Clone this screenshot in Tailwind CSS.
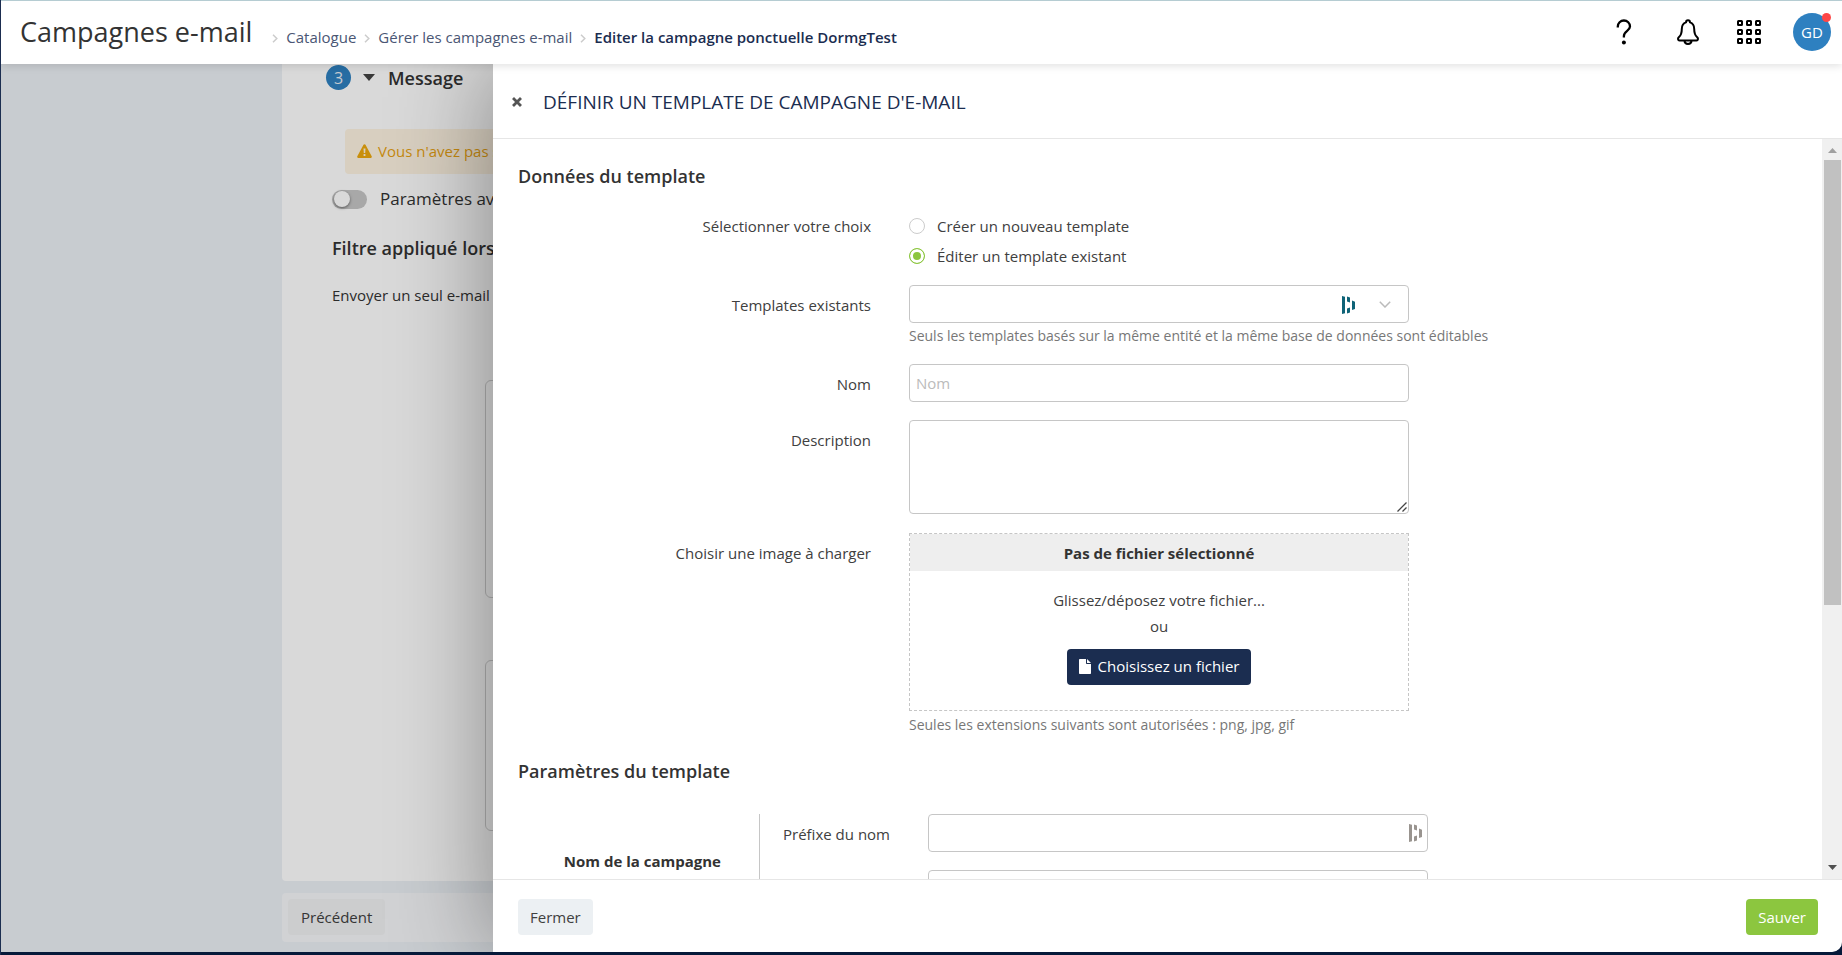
<!DOCTYPE html>
<html lang="fr">
<head>
<meta charset="utf-8">
<title>Campagnes e-mail</title>
<script src="https://cdn.jsdelivr.net/npm/@tailwindcss/browser@4"></script>
</head>
<body class="flex h-screen flex-col overflow-hidden border-l border-[#1b2d50] bg-[#061a3a] font-['Open_Sans','Noto_Sans',sans-serif] text-[15px] leading-5 text-[#404040]">

<header class="relative z-20 flex h-16 shrink-0 items-center justify-between border-t border-[#b5ccd2] bg-white pr-[11px] pl-[19px] shadow-[0_2px_8px_rgba(0,0,0,0.12)]">
  <div class="flex items-center pb-[2px]">
    <h1 class="text-[27px] leading-9 text-[#333]">Campagnes e-mail</h1>
    <nav aria-label="Fil d'Ariane" class="ml-5 flex items-baseline gap-2 pt-[11px] text-[#1b2d50]">
      <svg class="h-[9px] w-[6px]" viewBox="0 0 6 9" fill="none" stroke="#ccc" stroke-width="1.5"><path d="M1 .7 4.8 4.5 1 8.3"/></svg>
      <a href="#" class="text-[#4a5674]">Catalogue</a>
      <svg class="h-[9px] w-[6px]" viewBox="0 0 6 9" fill="none" stroke="#ccc" stroke-width="1.5"><path d="M1 .7 4.8 4.5 1 8.3"/></svg>
      <a href="#" class="text-[#4a5674]">Gérer les campagnes e-mail</a>
      <svg class="h-[9px] w-[6px]" viewBox="0 0 6 9" fill="none" stroke="#ccc" stroke-width="1.5"><path d="M1 .7 4.8 4.5 1 8.3"/></svg>
      <span class="font-semibold">Editer la campagne ponctuelle DormgTest</span>
    </nav>
  </div>
  <div class="flex items-center pb-px">
    <button type="button" aria-label="Aide" class="mr-[45px]">
      <svg class="h-[26px] w-4" viewBox="0 0 16 26" fill="none" stroke="#000" stroke-width="2.3"><path d="M1.8 8.5V7.6a6.1 6.1 0 0 1 12.2 0c0 4.2-6.1 4.4-6.1 9.4v1.6"/><circle cx="7.9" cy="23.6" r="2" fill="#000" stroke="none"/></svg>
    </button>
    <button type="button" aria-label="Notifications" class="mr-[38px]">
      <svg class="h-[26px] w-[22px]" viewBox="0 0 22 26" fill="none" stroke="#000" stroke-width="2" stroke-linejoin="round"><path d="M11 1.2c-1.3 0-2 .8-2 2.2C6 4.4 4.8 7 4.8 10c0 4-.7 6.3-3 8.300-1.300 1.200-.8 3.100.6 3.100h17.200c1.400 0 1.900-1.900.6-3.100-2.300-2-3-4.300-3-8.300 0-3-1.200-5.600-4.200-6.600 0-1.400-.7-2.200-2-2.200z"/><path d="M7.5 21.6c0 2 1.500 3.400 3.500 3.400s3.500-1.400 3.500-3.400"/></svg>
    </button>
    <button type="button" aria-label="Applications" class="mr-8">
      <svg class="h-6 w-6" viewBox="0 0 24 24" fill="none" stroke="#000" stroke-width="2"><rect x="1" y="1" width="4" height="4" rx=".5"/><rect x="10" y="1" width="4" height="4" rx=".5"/><rect x="19" y="1" width="4" height="4" rx=".5"/><rect x="1" y="10" width="4" height="4" rx=".5"/><rect x="10" y="10" width="4" height="4" rx=".5"/><rect x="19" y="10" width="4" height="4" rx=".5"/><rect x="1" y="19" width="4" height="4" rx=".5"/><rect x="10" y="19" width="4" height="4" rx=".5"/><rect x="19" y="19" width="4" height="4" rx=".5"/></svg>
    </button>
    <button type="button" class="relative flex h-[38px] w-[38px] items-center justify-center rounded-full bg-[#2e80c0] text-[15px] text-white">GD<span class="absolute top-0 right-0 h-[9px] w-[9px] rounded-full bg-[#fd4646]"></span></button>
  </div>
</header>

<div class="relative mb-[3px] min-h-0 flex-1 overflow-hidden rounded-br-[10px] bg-[#ecf0f5]">
  <main class="flex h-full flex-col pb-[10px] pl-[281px]">
    <section class="min-h-0 flex-1 overflow-hidden rounded-b bg-white text-[#333]">
      <div class="flex h-[27px] items-center pl-11">
        <span class="flex h-[25px] w-[25px] items-center justify-center rounded-full bg-[#2e80c0] text-base text-[#e8eef4]">3</span>
        <svg class="ml-3 h-[7px] w-3" viewBox="0 0 12 7" fill="#444"><path d="M0 0h12L6 7z"/></svg>
        <h2 class="ml-[13px] text-[18px] font-semibold">Message</h2>
      </div>
      <div class="mt-[38px] ml-[63px] flex h-[45px] items-center rounded bg-[#fef4e2] pb-[2px] pl-3 whitespace-nowrap text-[#e8a213]">
        <svg class="mr-[6px] h-[14px] w-[15px]" viewBox="0 0 15 14"><path d="M7.500.2c.5 0 .8.200 1 .6l6.200 11.500c.4.800-.1 1.600-.9 1.600H1.200c-.8 0-1.300-.8-.9-1.600L6.500.8c.2-.4.500-.6 1-.6z" fill="#eda90f"/><path d="M6.500 4.500h2l-.3 4.600H6.800zM6.600 10h1.800v1.900H6.600z" fill="#fef4e2"/></svg>
        Vous n'avez pas sélectionné de template
      </div>
      <div class="mt-[15px] ml-[50px]">
        <label class="flex items-center gap-[13px] text-[17px] whitespace-nowrap"><input type="checkbox" role="switch" class="peer sr-only"><span class="flex h-[19px] w-[35px] items-center rounded-full bg-[#c6c6c6] px-[2px]"><span class="h-4 w-4 rounded-full bg-white shadow-[0_1px_3px_rgba(0,0,0,0.5)]"></span></span>Paramètres avancés</label>
        <h3 class="mt-[29px] text-[18px] font-semibold whitespace-nowrap">Filtre appliqué lors de l'envoi</h3>
        <p class="mt-[27px] whitespace-nowrap">Envoyer un seul e-mail par adresse</p>
      </div>
      <div class="mt-[75px] ml-[203px] h-[218px] rounded-md border border-[#d0d0d0]"></div>
      <div class="mt-[62px] ml-[203px] h-[171px] rounded-md border border-[#d0d0d0]"></div>
    </section>
    <div class="mt-3 flex h-[49px] shrink-0 items-center rounded bg-[#f6f7fa] pb-px pl-[6px]">
      <button type="button" class="h-9 rounded bg-[#f0f1f2] px-[13px]">Précédent</button>
    </div>
  </main>

  <div class="absolute inset-0 bg-black/15"></div>

  <div role="dialog" aria-labelledby="dlg" class="absolute inset-y-0 right-0 left-[492px] flex flex-col rounded-br-[10px] bg-white shadow-[0_0_100px_rgba(0,0,0,0.4)]">
    <div class="flex h-[75px] shrink-0 items-center border-b border-[#e6e6e6] pt-px pl-[19px]">
      <button type="button" aria-label="Fermer le panneau"><svg class="h-[10px] w-[10px]" viewBox="0 0 10 10" stroke="#555" stroke-width="2.8" stroke-linecap="square"><path d="m2 2 6 6M8 2 2 8"/></svg></button>
      <h2 id="dlg" class="ml-[21px] text-[19px] leading-7 text-[#1b2d50]">DÉFINIR UN TEMPLATE DE CAMPAGNE D'E-MAIL</h2>
    </div>

    <div class="flex min-h-0 flex-1">
      <form id="tpl" class="min-w-0 flex-1 overflow-hidden pl-[25px]">
        <h3 class="mt-[23px] text-[18px] leading-7 font-semibold text-[#333]">Données du template</h3>

        <div role="radiogroup" aria-labelledby="choix" class="mt-[26px] flex gap-[38px]">
          <span id="choix" class="w-[353px] shrink-0 text-right">Sélectionner votre choix</span>
          <div class="flex flex-col gap-[10px]">
            <label class="flex items-center gap-3"><input type="radio" name="mode" class="h-4 w-4 appearance-none rounded-full border border-[#ccc] checked:border-[#8cc63f] checked:bg-[#8cc63f] checked:shadow-[inset_0_0_0_3px_#fff]">Créer un nouveau template</label>
            <label class="flex items-center gap-3"><input type="radio" name="mode" checked class="h-4 w-4 appearance-none rounded-full border border-[#ccc] checked:border-[#8cc63f] checked:bg-[#8cc63f] checked:shadow-[inset_0_0_0_3px_#fff]">Éditer un template existant</label>
          </div>
        </div>

        <div class="mt-[19px] flex gap-[38px]">
          <label for="existants" class="w-[353px] shrink-0 pt-[10px] text-right">Templates existants</label>
          <div>
            <div class="relative w-[500px]">
              <select id="existants" class="block h-[38px] w-full appearance-none rounded border border-[#c6c6c6] bg-white px-2"><option></option></select>
              <svg class="pointer-events-none absolute top-[11px] right-[53px] h-[18px] w-[14px]" viewBox="0 0 14 18" fill="#0e6377"><path d="M0 0l3 .8v16.400l-3 .8zM5 .5l3 .9v5L5 5.400zM5 12.600l3-1v5l-3 .9zM10 4.500l3 1.200v7.200l-3 1.200z"/></svg>
              <svg class="pointer-events-none absolute top-4 right-[18px] h-[7px] w-3" viewBox="0 0 12 7" fill="none" stroke="#bbb" stroke-width="1.5"><path d="M.8.8 6 6 11.200.8"/></svg>
            </div>
            <p class="mt-[3px] text-sm leading-5 whitespace-nowrap text-[#777]">Seuls les templates basés sur la même entité et la même base de données sont éditables</p>
          </div>
        </div>

        <div class="mt-[18px] flex gap-[38px]">
          <label for="nom" class="w-[353px] shrink-0 pt-[10px] text-right">Nom</label>
          <input id="nom" type="text" placeholder="Nom" class="h-[38px] w-[500px] rounded border border-[#c6c6c6] px-[6px] placeholder:text-[#bbb]">
        </div>

        <div class="mt-[18px] flex gap-[38px]">
          <label for="desc" class="w-[353px] shrink-0 pt-[10px] text-right">Description</label>
          <div class="relative">
            <textarea id="desc" class="block h-[94px] w-[500px] resize-none rounded border border-[#c6c6c6] px-[6px]"></textarea>
            <svg class="pointer-events-none absolute right-[2px] bottom-[2px] h-[10px] w-[10px]" viewBox="0 0 10 10" stroke="#444" stroke-width="1.3"><path d="M.5 9.500 9.500.5M5.500 9.500l4-4"/></svg>
          </div>
        </div>

        <div class="mt-[19px] flex gap-[38px]">
          <span class="w-[353px] shrink-0 pt-[10px] text-right">Choisir une image à charger</span>
          <div class="w-[500px]">
            <div class="flex h-[178px] flex-col items-center border border-dashed border-[#c6c6c6]">
              <div class="flex h-[37px] w-full items-center justify-center bg-[#eee] font-bold text-[#333]">Pas de fichier sélectionné</div>
              <p class="mt-[19px]">Glissez/déposez votre fichier...</p>
              <p class="mt-[6px]">ou</p>
              <button type="button" class="mt-[13px] flex h-9 items-center gap-[7px] rounded bg-[#1b2d50] px-3 pb-[2px] text-white"><svg class="h-[15px] w-3" viewBox="0 0 12 15" fill="#fff"><path d="M.8 0H7v4.200c0 .5.300.8.800.8H12v9.200c0 .5-.3.800-.8.800H.8c-.5 0-.8-.3-.8-.8V.8C0 .3.300 0 .8 0zM8 0l4 4H8z"/></svg>Choisissez un fichier</button>
            </div>
            <p class="mt-1 text-sm leading-5 text-[#777]">Seules les extensions suivants sont autorisées : png, jpg, gif</p>
          </div>
        </div>

        <h3 class="mt-[22px] text-[18px] leading-7 font-semibold text-[#333]">Paramètres du template</h3>

        <fieldset class="mt-[29px] flex" aria-labelledby="groupe">
          <div id="groupe" class="flex h-24 w-[242px] shrink-0 items-center justify-end border-r border-[#c6c6c6] pr-[38px] pb-[2px] font-bold text-[#333]">Nom de la campagne</div>
          <div class="flex flex-col gap-[18px]">
            <div class="flex gap-[38px]">
              <label for="prefixe" class="w-[130px] shrink-0 pt-[10px] text-right">Préfixe du nom</label>
              <div class="relative w-[500px]">
                <input id="prefixe" type="text" class="block h-[38px] w-full rounded border border-[#c6c6c6] px-[6px]">
                <svg class="absolute top-[10px] right-[5px] h-[18px] w-[14px]" viewBox="0 0 14 18" fill="#99948f"><path d="M0 0l3 .8v16.400l-3 .8zM5 .5l3 .9v5L5 5.400zM5 12.600l3-1v5l-3 .9zM10 4.500l3 1.200v7.200l-3 1.200z"/></svg>
              </div>
            </div>
            <div class="pl-[168px]">
              <input type="text" aria-label="Suffixe du nom" class="block h-[38px] w-[500px] rounded border border-[#c6c6c6] px-[6px]">
            </div>
          </div>
        </fieldset>
      </form>
      <div aria-hidden="true" class="flex w-5 shrink-0 flex-col items-center bg-[#f0f0f0]">
        <svg class="mt-[9px] mb-[7px] h-[5px] w-[9px] shrink-0" viewBox="0 0 9 5" fill="#a0a0a0"><path d="M0 5h9L4.500 0z"/></svg>
        <div class="min-h-0 flex-1 self-stretch pr-px pl-[2px]"><div class="h-[64%] bg-[#c1c1c1]"></div></div>
        <svg class="my-[9px] h-[5px] w-[9px] shrink-0" viewBox="0 0 9 5" fill="#505050"><path d="M0 0h9L4.500 5z"/></svg>
      </div>
    </div>

    <div class="flex h-[73px] shrink-0 items-center justify-between border-t border-[#e6e6e6] pt-[2px] pr-6 pl-[25px]">
      <button type="button" class="h-9 rounded bg-[#ecf0f3] px-3 pb-px">Fermer</button>
      <button type="submit" form="tpl" class="h-9 rounded bg-[#8cc63f] px-3 pb-px text-white">Sauver</button>
    </div>
  </div>
</div>
</body>
</html>
